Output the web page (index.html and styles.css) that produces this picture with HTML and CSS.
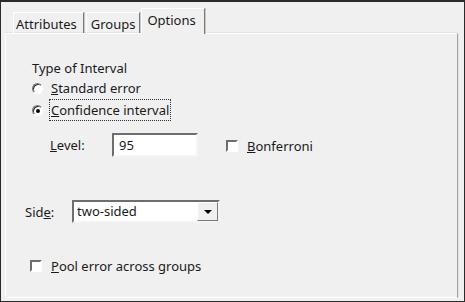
FILE: index.html
```html
<!DOCTYPE html>
<html>
<head>
  <meta charset="UTF-8">
  <title>Options</title>
  <link rel="stylesheet" href="styles.css">
</head>
<body>

  <div class="window">
    <div class="tabs">
      <div class="tab">Attributes</div>
      <div class="tab">Groups</div>
      <div class="tab active">Options</div>
    </div>

    <div class="panel">
      <div class="group-title">Type of Interval</div>
      <label class="option">
        <span class="radio"></span>
        <span><u>S</u>tandard error</span>
      </label>
      <label class="option">
        <span class="radio checked"></span>
        <span class="focus"><u>C</u>onfidence interval</span>
      </label>

      <div class="level-row">
        <span class="field-label"><u>L</u>evel:</span>
        <div class="textbox">95</div>
        <label class="check-option">
          <span class="checkbox"></span>
          <span><u>B</u>onferroni</span>
        </label>
      </div>

      <div class="side-row">
        <span class="field-label">Sid<u>e</u>:</span>
        <div class="combo">
          <span class="combo-value">two-sided</span>
          <span class="combo-btn"><span class="arrow"></span></span>
        </div>
      </div>

      <label class="check-option pool">
        <span class="checkbox"></span>
        <span><u>P</u>ool error across groups</span>
      </label>
    </div>
  </div>

</body>
</html>
```

FILE: styles.css
```css
body {
  margin: 0;
  font-family: "Noto Sans", "Liberation Sans", Arial, sans-serif;
  font-size: 13px;
  color: #1a1a1a;
}
.window {
  width: 465px;
  height: 302px;
  box-sizing: border-box;
  background-color: #f0f0f0;
  border: 1px solid #2a2a2a;
  border-top-width: 2px;
  padding: 0 6px 3px 4px;
  display: flex;
  flex-direction: column;
}
.tabs {
  display: flex;
  align-items: flex-end;
  padding: 0 0 0 8px;
  height: 31px;
  box-sizing: border-box;
  position: relative;
  z-index: 1;
}
.tab {
  height: 21px;
  line-height: 23px;
  padding: 0 6px 0 2px;
  margin-right: 2px;
  border-left: 1px solid #ffffff;
  border-top: 1px solid #ffffff;
  border-right: 1px solid #7a7a7a;
  box-shadow: 1px 0 0 #c8c8c8;
  box-sizing: border-box;
}
.tab:nth-child(2) {
  padding: 0 4px;
}
.tab.active {
  height: 26px;
  line-height: 22px;
  padding: 0 8px 0 5px;
  margin-bottom: -1px;
  margin-left: -1px;
  background-color: #f0f0f0;
}
.panel {
  flex: 1;
  border-top: 1px solid #ffffff;
  border-left: 1px solid #ffffff;
  border-right: 1px solid #a0a0a0;
  border-bottom: 1px solid #ffffff;
  box-shadow: 1px 0 0 #e4e4e4, 0 -1px 0 #e4e4e4;
  padding: 26px 0 0 25px;
  display: flex;
  flex-direction: column;
}
.group-title {
  height: 16px;
  line-height: 16px;
  margin-left: 1px;
}
.option {
  display: flex;
  align-items: center;
  height: 22px;
  margin-top: 1px;
  line-height: 16px;
}
.option:nth-of-type(2) {
  margin-top: 0;
}
.radio {
  width: 9px;
  height: 9px;
  border-radius: 50%;
  margin: 0 8px 0 1px;
  background: #ffffff;
  border: 1px solid;
  border-color: #7a7a7a #ffffff #ffffff #7a7a7a;
  box-shadow: inset 1px 1px 0 #303030;
  position: relative;
}
.radio.checked::after {
  content: "";
  position: absolute;
  left: 3px;
  top: 3px;
  width: 4px;
  height: 4px;
  border-radius: 50%;
  background: #000000;
}
.focus {
  outline: 1px dotted #333333;
  outline-offset: 1px;
  padding: 1px 0;
}
.level-row {
  display: flex;
  align-items: center;
  margin-top: 12px;
  margin-left: 19px;
  line-height: 16px;
}
.field-label {
  width: 62px;
}
.textbox {
  width: 86px;
  height: 24px;
  box-sizing: border-box;
  background: #ffffff;
  border: 2px solid;
  border-color: #6e6e6e #f4f4f4 #f4f4f4 #6e6e6e;
  padding: 2px 0 0 5px;
  line-height: 16px;
}
.check-option {
  display: flex;
  align-items: center;
  line-height: 16px;
}
.level-row .check-option {
  margin-left: 28px;
  margin-top: 2px;
}
.checkbox {
  width: 12px;
  height: 12px;
  box-sizing: border-box;
  background: #ffffff;
  border: 2px solid;
  border-color: #6e6e6e #ffffff #ffffff #6e6e6e;
  margin-right: 9px;
}
.side-row {
  display: flex;
  align-items: center;
  margin-top: 43px;
  margin-left: -6px;
  line-height: 16px;
}
.side-row .field-label {
  width: 47px;
}
.combo {
  width: 148px;
  height: 23px;
  box-sizing: border-box;
  background: #ffffff;
  border: 2px solid;
  border-color: #6e6e6e #f4f4f4 #f4f4f4 #6e6e6e;
  display: flex;
  align-items: stretch;
}
.combo-value {
  flex: 1;
  padding-left: 3px;
  line-height: 18px;
}
.combo-btn {
  width: 19px;
  background: #f0f0f0;
  border: 1px solid;
  border-color: #ffffff #7a7a7a #7a7a7a #ffffff;
  display: flex;
  align-items: center;
  justify-content: center;
}
.arrow {
  width: 0;
  height: 0;
  border-left: 4px solid transparent;
  border-right: 4px solid transparent;
  border-top: 4px solid #000000;
  margin-top: 1px;
}
.pool {
  margin-top: 35px;
  margin-left: -1px;
}
```
